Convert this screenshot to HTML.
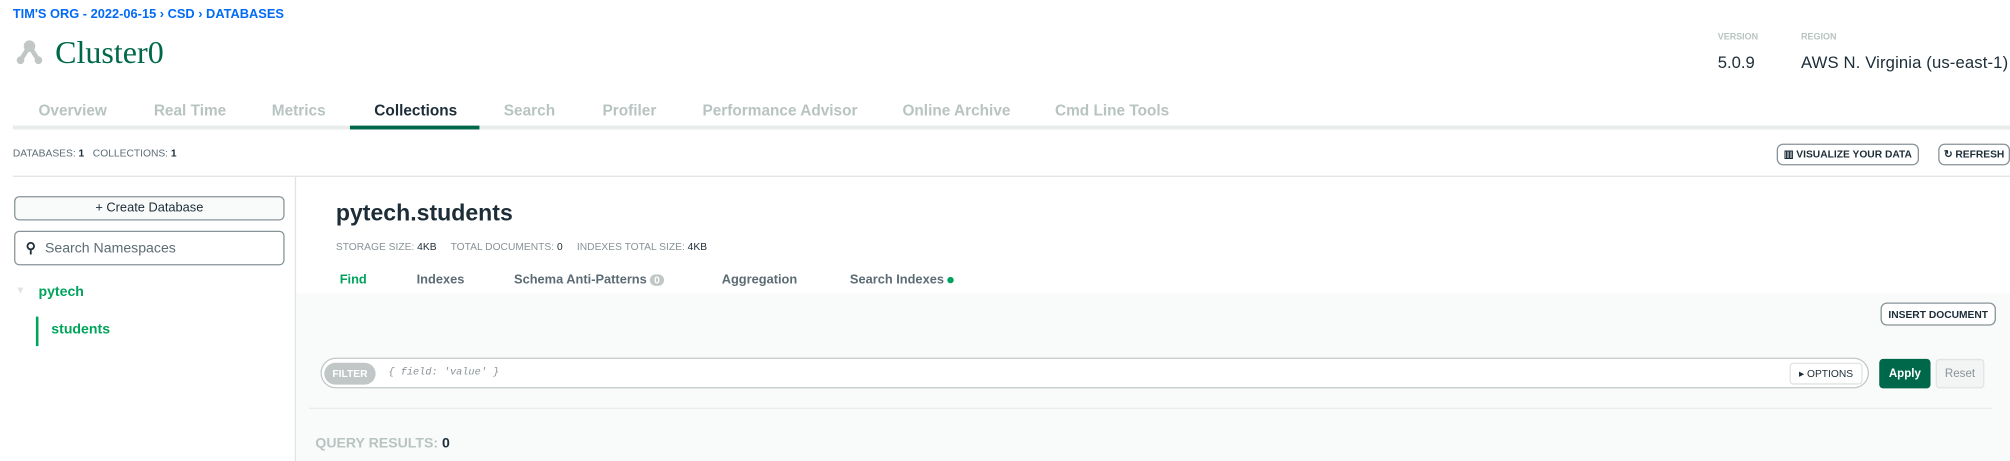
<!DOCTYPE html>
<html><head><meta charset="utf-8"><style>
html,body{margin:0;padding:0;background:#fff;width:2010px;height:461px;overflow:hidden}
#w{position:absolute;left:0;top:0;width:1568px;height:360px;transform:scale(1.28189);transform-origin:0 0;font-family:"Liberation Sans",sans-serif}
.a{position:absolute;white-space:nowrap}
.btn{position:absolute;border:1px solid #889397;border-radius:4px;background:#fff;font-size:8px;font-weight:bold;color:#1c2d38;display:flex;align-items:center;justify-content:center;box-sizing:border-box}
</style></head><body><div id="w">
<div class="a" style="left:10px;top:6px;font-size:10px;font-weight:bold;color:#016bf8">TIM'S ORG - 2022-06-15 › CSD › DATABASES</div>
<svg class="a" style="left:12px;top:31px" width="22" height="20" viewBox="0 0 22 20"><path d="M11 5 L4 16 M11 5 L18 16" stroke="#c1c7c6" stroke-width="3.5" fill="none"/><circle cx="11" cy="5" r="4.5" fill="#c1c7c6"/><circle cx="4" cy="16" r="3" fill="#c1c7c6"/><circle cx="18" cy="16" r="3" fill="#c1c7c6"/></svg>
<div class="a" style="left:43px;top:28px;font-family:'Liberation Serif',serif;font-size:25px;color:#00684a">Cluster0</div>
<div class="a" style="left:1340px;top:26px;font-size:7px;font-weight:bold;color:#b8c4c2">VERSION</div>
<div class="a" style="left:1340px;top:41px;font-size:13px;color:#1c2d38">5.0.9</div>
<div class="a" style="left:1405px;top:26px;font-size:7px;font-weight:bold;color:#b8c4c2">REGION</div>
<div class="a" style="left:1405px;top:41px;font-size:13px;color:#1c2d38;letter-spacing:0.1px">AWS N. Virginia (us-east-1)</div>
<div class="a" style="left:10px;top:98px;width:1558px;height:3px;background:#e8edeb"></div>
<div class="a" style="left:273px;top:98px;width:101px;height:3px;background:#00684a"></div>
<div style="font-size:12px;font-weight:bold;color:#b8c4c2">
<div class="a" style="left:30px;top:79px">Overview</div>
<div class="a" style="left:120px;top:79px">Real Time</div>
<div class="a" style="left:212px;top:79px">Metrics</div>
<div class="a" style="left:292px;top:79px;color:#1c2d38">Collections</div>
<div class="a" style="left:393px;top:79px">Search</div>
<div class="a" style="left:470px;top:79px">Profiler</div>
<div class="a" style="left:548px;top:79px">Performance Advisor</div>
<div class="a" style="left:704px;top:79px">Online Archive</div>
<div class="a" style="left:823px;top:79px">Cmd Line Tools</div>
</div>
<div class="a" style="left:10px;top:115px;font-size:8px;color:#5c6c75">DATABASES: <b style="color:#1c2d38">1</b>&nbsp;&nbsp; COLLECTIONS: <b style="color:#1c2d38">1</b></div>
<div class="btn" style="left:1386px;top:112px;width:111px;height:17px;border-radius:5px">▥ VISUALIZE YOUR DATA</div>
<div class="btn" style="left:1512px;top:112px;width:56px;height:17px;border-radius:5px">↻ REFRESH</div>
<div class="a" style="left:10px;top:137px;width:1558px;height:1px;background:#e0e4e4"></div>
<div class="a" style="left:230px;top:138px;width:1px;height:222px;background:#e0e4e4"></div>
<div class="btn" style="left:11px;top:153px;width:211px;height:19px;font-size:10px;font-weight:normal;background:#f9fbfa;color:#1c2d38">+ Create Database</div>
<div class="btn" style="left:11px;top:180px;width:211px;height:27px;justify-content:flex-start;font-size:11px;font-weight:normal;color:#5c6c75;padding-left:8px"><span style="font-weight:bold;color:#1c2d38;margin-right:7px">⚲</span>Search Namespaces</div>
<div class="a" style="left:12px;top:222px;font-size:8px;color:#e0e4e4">▼</div>
<div class="a" style="left:30px;top:222px;font-size:11px;font-weight:bold;color:#00a35c">pytech</div>
<div class="a" style="left:28px;top:247px;width:2px;height:23px;background:#00a35c"></div>
<div class="a" style="left:40px;top:251px;font-size:11px;font-weight:bold;color:#00a35c">students</div>
<div class="a" style="left:231px;top:229px;width:1337px;height:131px;background:#f9fbfa"></div>
<div class="a" style="left:262px;top:156px;font-size:18px;font-weight:bold;color:#1c2d38">pytech.students</div>
<div class="a" style="left:262px;top:188px;font-size:8px;color:#889397">STORAGE SIZE: <span style="color:#1c2d38">4KB</span>&nbsp;&nbsp;&nbsp;&nbsp; TOTAL DOCUMENTS: <span style="color:#1c2d38">0</span>&nbsp;&nbsp;&nbsp;&nbsp; INDEXES TOTAL SIZE: <span style="color:#1c2d38">4KB</span></div>
<div style="font-size:10px;font-weight:bold;color:#5c6c75">
<div class="a" style="left:265px;top:213px;color:#00a35c">Find</div>
<div class="a" style="left:325px;top:213px">Indexes</div>
<div class="a" style="left:401px;top:213px">Schema Anti-Patterns <span style="display:inline-block;background:#c1c7c6;color:#fff;border-radius:6px;padding:0 3px;font-size:8px">0</span></div>
<div class="a" style="left:563px;top:213px">Aggregation</div>
<div class="a" style="left:663px;top:213px">Search Indexes <span style="display:inline-block;width:5px;height:5px;border-radius:50%;background:#00a35c;vertical-align:middle"></span></div>
</div>
<div class="btn" style="left:1467px;top:236px;width:90px;height:18px;border-radius:5px">INSERT DOCUMENT</div>
<div class="a" style="left:250px;top:279px;width:1208px;height:24px;border:1px solid #c1c7c6;border-radius:12px;background:#fff;box-sizing:border-box"></div>
<div class="a" style="left:253px;top:283px;width:40px;height:17px;border-radius:9px;background:#c1c7c6;color:#fff;font-size:8px;font-weight:bold;text-align:center;line-height:17px">FILTER</div>
<div class="a" style="left:303px;top:286px;font-family:'Liberation Mono',monospace;font-style:italic;font-size:8px;color:#889397">{ field: 'value' }</div>
<div class="btn" style="left:1396px;top:283px;width:57px;height:17px;border-color:#e0e4e4;border-radius:3px;font-weight:normal">▸ OPTIONS</div>
<div class="a" style="left:1466px;top:280px;width:40px;height:23px;background:#00684a;border-radius:3px;color:#fff;font-size:9px;font-weight:bold;text-align:center;line-height:22px">Apply</div>
<div class="a" style="left:1510px;top:280px;width:38px;height:23px;background:#f3f5f4;border:1px solid #e0e4e4;box-sizing:border-box;border-radius:3px;color:#889397;font-size:9px;text-align:center;line-height:21px">Reset</div>
<div class="a" style="left:241px;top:318px;width:1313px;height:1px;background:#e8edeb"></div>
<div class="a" style="left:246px;top:340px;font-size:11px;font-weight:bold;color:#b8c4c2">QUERY RESULTS: <span style="color:#1c2d38">0</span></div>
</div></body></html>
